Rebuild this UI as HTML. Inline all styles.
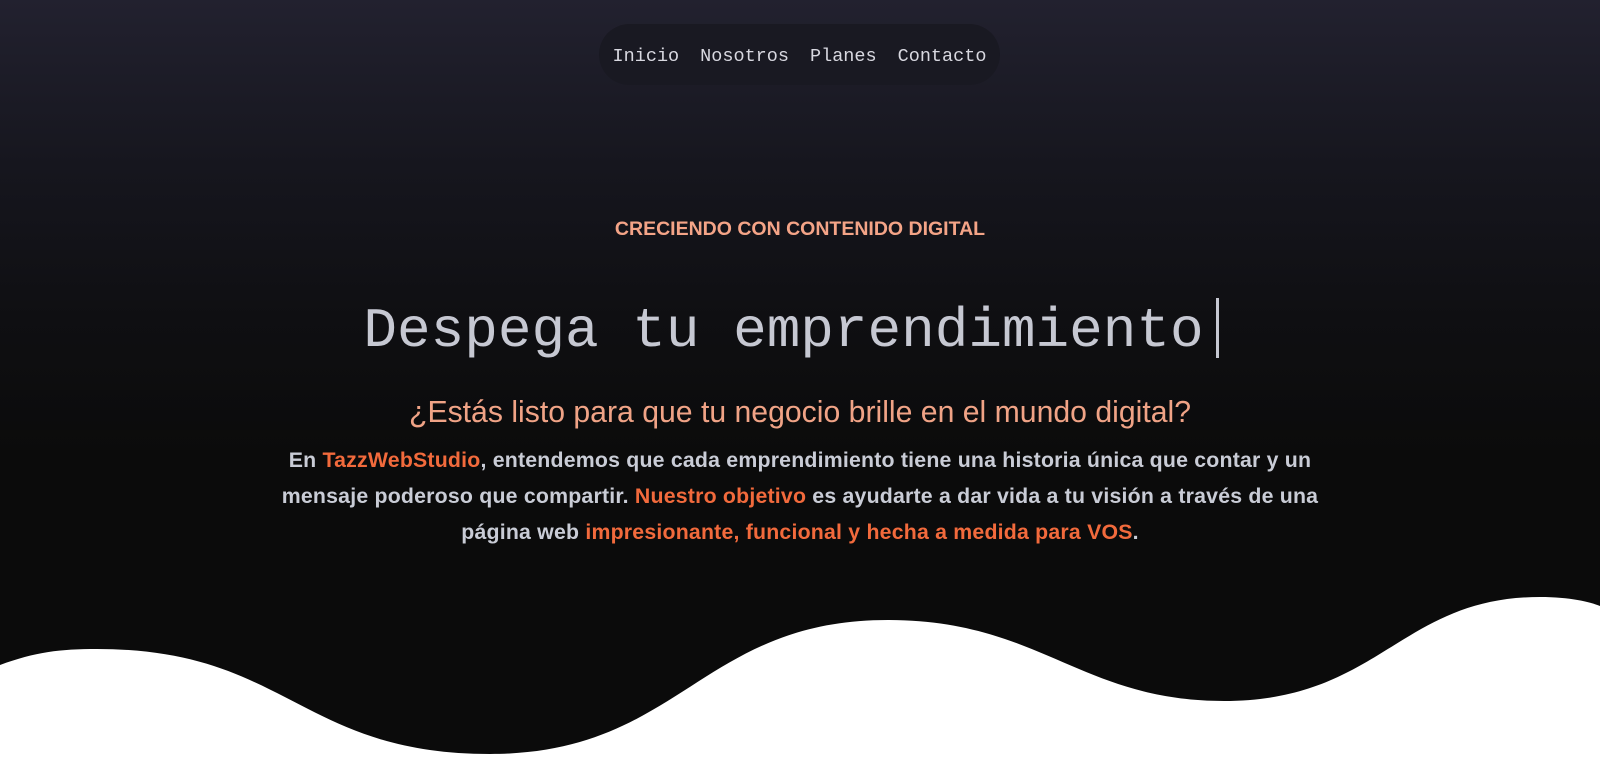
<!DOCTYPE html>
<html><head><meta charset="utf-8"><style>
html,body{margin:0;padding:0}
body{width:1600px;height:757px;overflow:hidden;position:relative;
background:linear-gradient(180deg,#22212f 0%,#16161e 22%,#0f0f12 42%,#0b0b0b 60%,#0b0b0b 100%);
font-family:"Liberation Sans",sans-serif;}
.nav{position:absolute;left:599px;top:24px;width:401px;height:61px;border-radius:31px;background:#191922;
display:flex;align-items:center;justify-content:center;gap:21px;font-family:"Liberation Mono",monospace;font-size:18.5px;color:#d8d8e0;padding-top:3px;box-sizing:border-box}
.abs{position:absolute;left:0;width:1600px;text-align:center;white-space:nowrap}
.sub{top:218px;font-size:19.5px;line-height:22px;font-weight:bold;color:#f4a487}
.h1{top:298px;left:-9px;font-family:"Liberation Mono",monospace;font-size:56px;line-height:56px;color:#c6c8d2}
.h1 span{display:inline-block;width:3px;height:60px;background:#c6c8d2;vertical-align:-12px;margin-left:12px}
.q{top:396px;font-size:30.2px;line-height:34px;color:#f0a386}
.p{top:442px;font-size:21.3px;line-height:36px;font-weight:bold;color:#c9ccd6;letter-spacing:.2px}
.o{color:#f26a3c}
svg{position:absolute;left:0;top:0}
</style></head><body>
<div class="nav"><span>Inicio</span><span>Nosotros</span><span>Planes</span><span>Contacto</span></div>
<div class="abs sub">CRECIENDO CON CONTENIDO DIGITAL</div>
<div class="abs h1">Despega tu emprendimiento<span></span></div>
<div class="abs q">¿Estás listo para que tu negocio brille en el mundo digital?</div>
<div class="abs p">En <span class="o">TazzWebStudio</span>, entendemos que cada emprendimiento tiene una historia única que contar y un<br>mensaje poderoso que compartir. <span class="o">Nuestro objetivo</span> es ayudarte a dar vida a tu visión a través de una<br>página web <span class="o">impresionante, funcional y hecha a medida para VOS</span>.</div>
<svg width="1600" height="757" viewBox="0 0 1600 757">
<path fill="#ffffff" d="M0,665 C35,652 60,649 97,649 C287,649 300,754 490,754 C680,754 700,620 888,620 C1040,620 1080,701 1224,701 C1380,701 1400,597 1540,597 C1570,597 1590,602 1600,606 L1600,757 L0,757 Z"/>
</svg>
</body></html>
